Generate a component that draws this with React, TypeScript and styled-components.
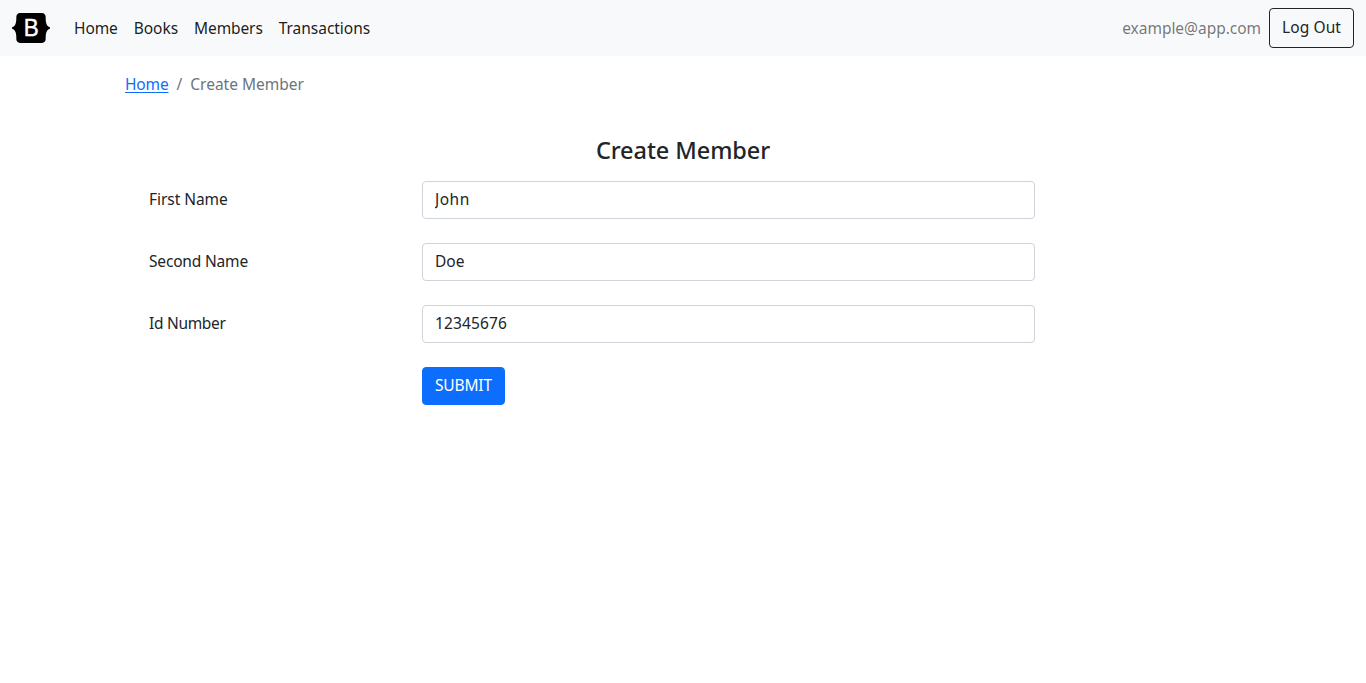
import React, { useState } from "react";
import styled, { createGlobalStyle } from "styled-components";

const GlobalStyle = createGlobalStyle`
  *, *::before, *::after { box-sizing: border-box; }
  body {
    margin: 0;
    background: #fff;
    color: #212529;
    font-family: "Noto Sans", sans-serif;
    font-size: 15.5px;
    line-height: 24px;
  }
`;

const Navbar = styled.nav`
  display: flex;
  align-items: center;
  height: 56px;
  padding: 8px 12px;
  background: #f8f9fa;
`;

const Brand = styled.a`
  display: flex;
  margin-right: 16px;
`;

const NavList = styled.ul`
  display: flex;
  flex: 1;
  margin: 0;
  padding: 0;
  list-style: none;
`;

const Text = styled.span<{ $tracking?: number }>`
  display: inline-block;
  white-space: nowrap;
  letter-spacing: ${(p) => p.$tracking ?? 0}px;
`;

const NavLink = styled.a`
  display: block;
  padding: 8px;
  color: rgba(0, 0, 0, 0.9);
  text-decoration: none;
`;

const Account = styled.div`
  display: flex;
  align-items: center;
  gap: 8px;
  color: rgba(0, 0, 0, 0.55);
`;

const Button = styled.button<{ $primary?: boolean }>`
  height: ${(p) => (p.$primary ? 38 : 40)}px;
  padding: 0 12px 2px;
  border: 1px solid ${(p) => (p.$primary ? "#0d6efd" : "#212529")};
  border-radius: 4px;
  background: ${(p) => (p.$primary ? "#0d6efd" : "transparent")};
  color: ${(p) => (p.$primary ? "#fff" : "#212529")};
  font: inherit;
  cursor: pointer;
`;

const Container = styled.main`
  width: 1140px;
  margin: 0 auto;
  padding: 16px 12px;
`;

const Breadcrumb = styled.ol`
  display: flex;
  gap: 8px;
  margin: 0 0 40px;
  padding: 0;
  list-style: none;
  color: #6c757d;
`;

const CrumbLink = styled.a`
  color: #0d6efd;
  letter-spacing: -0.15px;
  text-decoration: underline;
  text-decoration-thickness: 1px;
  text-underline-offset: 2px;
  text-decoration-skip-ink: none;
`;

const Title = styled.h1`
  margin: 0 0 16px;
  font-size: 23.5px;
  font-weight: 500;
  line-height: 29px;
  text-align: center;
`;

const Form = styled.form`
  display: grid;
  gap: 24px;
  padding: 0 24px;
`;

const Row = styled.div`
  display: grid;
  grid-template-columns: 249px 613px;
  column-gap: 24px;
`;

const Label = styled.label`
  padding-top: 6px;
`;

const Input = styled.input<{ $tracking?: number }>`
  width: 100%;
  height: 38px;
  padding: 5px 12px 7px;
  border: 1px solid #ced4da;
  border-radius: 4px;
  background: #fff;
  color: #212529;
  font: inherit;
  letter-spacing: ${(p) => p.$tracking ?? 0}px;
  outline: none;
`;

const Actions = styled.div`
  grid-column: 2;
  display: flex;
`;

const Logo = () => (
  <svg width="38" height="30" viewBox="0 0 118 94" role="img" aria-label="Bootstrap">
    <path d="M24.509 0c-6.733 0-11.715 5.893-11.492 12.284.214 6.14-.064 14.092-2.066 20.577C8.943 39.365 5.547 43.485 0 44.014v5.972c5.547.529 8.943 4.649 10.951 11.153 2.002 6.485 2.28 14.437 2.066 20.577C12.794 88.106 17.776 94 24.51 94H93.5c6.733 0 11.714-5.893 11.491-12.284-.214-6.14.064-14.092 2.066-20.577 2.009-6.504 5.396-10.624 10.943-11.153v-5.972c-5.547-.529-8.934-4.649-10.943-11.153-2.002-6.484-2.28-14.437-2.066-20.577C105.214 5.894 100.233 0 93.5 0H24.508z" />
    <text x="36" y="72" fill="#fff" stroke="#fff" strokeWidth="1.2" fontFamily="Liberation Sans, sans-serif" fontSize="72.5" textLength="47" lengthAdjust="spacingAndGlyphs">B</text>
  </svg>
);

const links = [
  { name: "Home", tracking: -0.1 },
  { name: "Books", tracking: -0.04 },
  { name: "Members", tracking: -0.1 },
  { name: "Transactions", tracking: -0.03 },
];

const fields = [
  { id: "first", label: "First Name", value: "John", labelTracking: -0.05, tracking: 0.5 },
  { id: "second", label: "Second Name", value: "Doe", labelTracking: -0.18, tracking: 0 },
  { id: "number", label: "Id Number", value: "12345676", labelTracking: -0.3, tracking: 0.13 },
];

export default function App() {
  const [values, setValues] = useState(fields.map((f) => f.value));
  return (
    <>
      <GlobalStyle />
      <Navbar>
        <Brand href="#"><Logo /></Brand>
        <NavList>
          {links.map((l) => (
            <li key={l.name}>
              <NavLink href="#"><Text $tracking={l.tracking}>{l.name}</Text></NavLink>
            </li>
          ))}
        </NavList>
        <Account>
          <Text $tracking={-0.03}>example@app.com</Text>
          <Button type="button"><Text $tracking={0.09}>Log Out</Text></Button>
        </Account>
      </Navbar>
      <Container>
        <Breadcrumb>
          <li><CrumbLink href="#">Home</CrumbLink></li>
          <li>/</li>
          <li><Text>Create Member</Text></li>
        </Breadcrumb>
        <Title><Text $tracking={-0.08}>Create Member</Text></Title>
        <Form onSubmit={(e) => e.preventDefault()}>
          {fields.map((f, i) => (
            <Row key={f.id}>
              <Label htmlFor={f.id}><Text $tracking={f.labelTracking}>{f.label}</Text></Label>
              <Input
                id={f.id}
                $tracking={f.tracking}
                value={values[i]}
                onChange={(e) => setValues(values.map((v, j) => (j === i ? e.target.value : v)))}
              />
            </Row>
          ))}
          <Row>
            <Actions><Button $primary type="submit"><Text $tracking={-0.17}>SUBMIT</Text></Button></Actions>
          </Row>
        </Form>
      </Container>
    </>
  );
}
